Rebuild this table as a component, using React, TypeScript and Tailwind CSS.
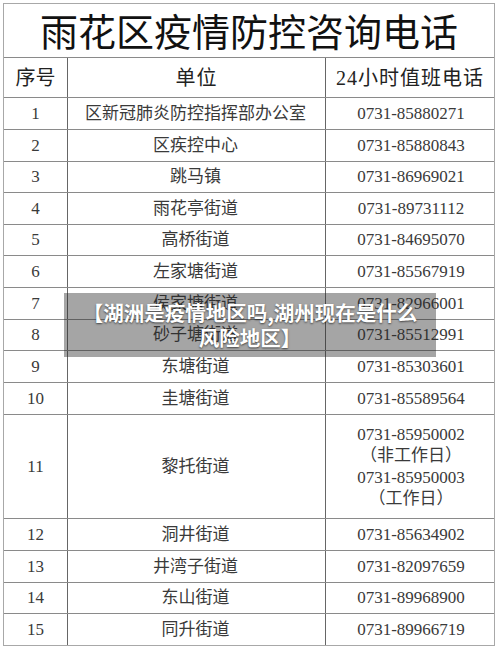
import type { ReactNode } from "react";

type Row = { no: string; unit: string; phone: ReactNode; h: string };

const rows: Row[] = [
  { no: "1", unit: "区新冠肺炎防控指挥部办公室", phone: "0731-85880271", h: "h-[32px]" },
  { no: "2", unit: "区疾控中心", phone: "0731-85880843", h: "h-[32px]" },
  { no: "3", unit: "跳马镇", phone: "0731-86969021", h: "h-[31px]" },
  { no: "4", unit: "雨花亭街道", phone: "0731-89731112", h: "h-[32px]" },
  { no: "5", unit: "高桥街道", phone: "0731-84695070", h: "h-[31px]" },
  { no: "6", unit: "左家塘街道", phone: "0731-85567919", h: "h-[32px]" },
  { no: "7", unit: "侯家塘街道", phone: "0731-82966001", h: "h-[32px]" },
  { no: "8", unit: "砂子塘街道", phone: "0731-85512991", h: "h-[31px]" },
  { no: "9", unit: "东塘街道", phone: "0731-85303601", h: "h-[32px]" },
  { no: "10", unit: "圭塘街道", phone: "0731-85589564", h: "h-[32px]" },
  {
    no: "11",
    unit: "黎托街道",
    phone: (
      <div className="flex flex-col items-center leading-[21.5px]">
        <span>0731-85950002</span>
        <span>（非工作日）</span>
        <span>0731-85950003</span>
        <span>（工作日）</span>
      </div>
    ),
    h: "h-[104px]",
  },
  { no: "12", unit: "洞井街道", phone: "0731-85634902", h: "h-[32px]" },
  { no: "13", unit: "井湾子街道", phone: "0731-82097659", h: "h-[32px]" },
  { no: "14", unit: "东山街道", phone: "0731-89968900", h: "h-[31px]" },
  { no: "15", unit: "同升街道", phone: "0731-89966719", h: "h-[31px]" },
];

const serif = "font-['Liberation_Serif','Noto_Sans_CJK_SC',serif]";

export default function App() {
  return (
    <div className="w-[500px] h-[650px] bg-white pt-[3px] pl-[3px] overflow-hidden">
      <div className="relative w-[492px] border border-[#a8a8a8] text-[#3a3a3a]">
        <div className="h-[54px] flex items-center justify-center border-b border-[#8a8a8a] font-['Noto_Sans_CJK_SC',sans-serif] text-[38px] text-[#111] leading-none pb-[2px]">
          雨花区疫情防控咨询电话
        </div>
        <div className={`h-[40px] flex border-b border-[#8a8a8a] text-[20px] text-[#222] ${serif}`}>
          <div className="w-[64px] flex items-center justify-center border-r border-[#666]">序号</div>
          <div className="w-[258px] flex items-center justify-center border-r border-[#666] tracking-[1px]">单位</div>
          <div className="flex-1 flex items-center justify-center tracking-[1px]">24小时值班电话</div>
        </div>
        {rows.map((r, i) => (
          <div
            key={r.no}
            className={`${r.h} flex text-[17px] ${serif} ${i < rows.length - 1 ? "border-b border-[#8a8a8a]" : ""}`}
          >
            <div className="w-[64px] flex items-center justify-center border-r border-[#666]">{r.no}</div>
            <div className="w-[258px] flex items-center justify-center border-r border-[#666] pr-[2px]">{r.unit}</div>
            <div className="flex-1 flex items-center justify-center pl-[2px]">{r.phone}</div>
          </div>
        ))}

        <div className="absolute left-[60px] top-[289px] w-[372px] h-[64px] bg-[rgba(40,40,40,0.42)] flex flex-col items-center justify-center font-['Noto_Sans_CJK_SC',sans-serif] font-bold text-white text-[20.5px] leading-[25px] [text-shadow:0_1px_2px_rgba(0,0,0,0.6)]">
          <span>【湖洲是疫情地区吗,湖州现在是什么</span>
          <span>风险地区】</span>
        </div>
      </div>
    </div>
  );
}
